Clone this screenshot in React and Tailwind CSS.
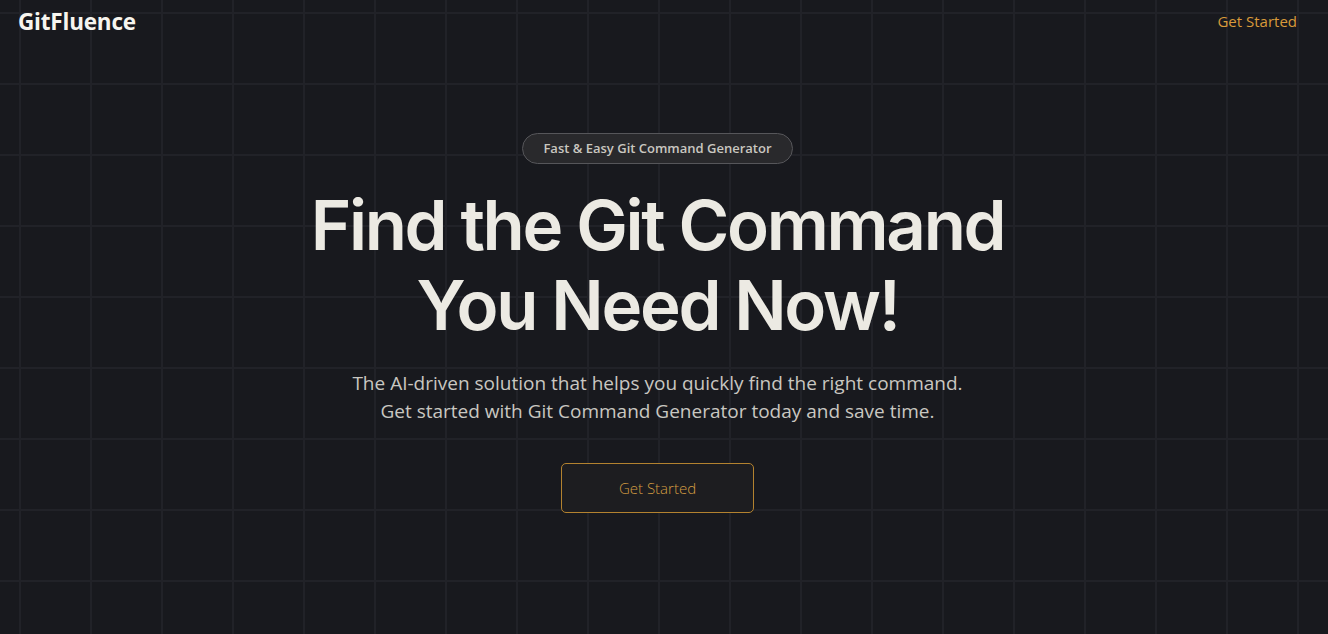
import React from 'react';

const App = () => {
  return (
    <div className="min-h-screen w-full bg-[#18191e] bg-[linear-gradient(to_right,#212228_2px,transparent_2px),linear-gradient(to_bottom,#212228_2px,transparent_2px)] bg-[size:71px_71px] bg-[position:19px_12px] font-['Open_Sans',sans-serif]">
      {/* Nav */}
      <nav className="flex items-start justify-between pl-[18px] pr-[31px] pt-[5px]">
        <span className="text-[22.5px] font-bold text-[#f7f5ef] tracking-[-0.2px]">GitFluence</span>
        <a className="text-[15px] text-[#d99a3a] pt-[5px] cursor-pointer">Get Started</a>
      </nav>

      {/* Hero */}
      <section className="flex flex-col items-center pt-[94px] pr-[13px] pb-20">
        <div className="h-[31px] px-[20px] flex items-center rounded-full border border-[#56565a] bg-[#29292c]">
          <span className="text-[13px] font-semibold text-[#c9c7c0]">Fast &amp; Easy Git Command Generator</span>
        </div>

        <h1 className="mt-[21px] text-center font-['Inter',sans-serif] font-semibold text-[69px] leading-[80px] tracking-[-2.3px] text-[#eceae3]">
          Find the Git Command
          <br />
          You Need Now!
        </h1>

        <p className="mt-[24px] text-center text-[19px] leading-[28px] text-[#c9c7c1]">
          The AI-driven solution that helps you quickly find the right command.
          <br />
          Get started with Git Command Generator today and save time.
        </p>

        <button className="mt-[38px] w-[193px] h-[50px] rounded-[5px] border border-[#b3822f] bg-[#1d1d20] text-[15px] font-light text-[#d59d42]">
          Get Started
        </button>
      </section>
    </div>
  );
};

export default App;
